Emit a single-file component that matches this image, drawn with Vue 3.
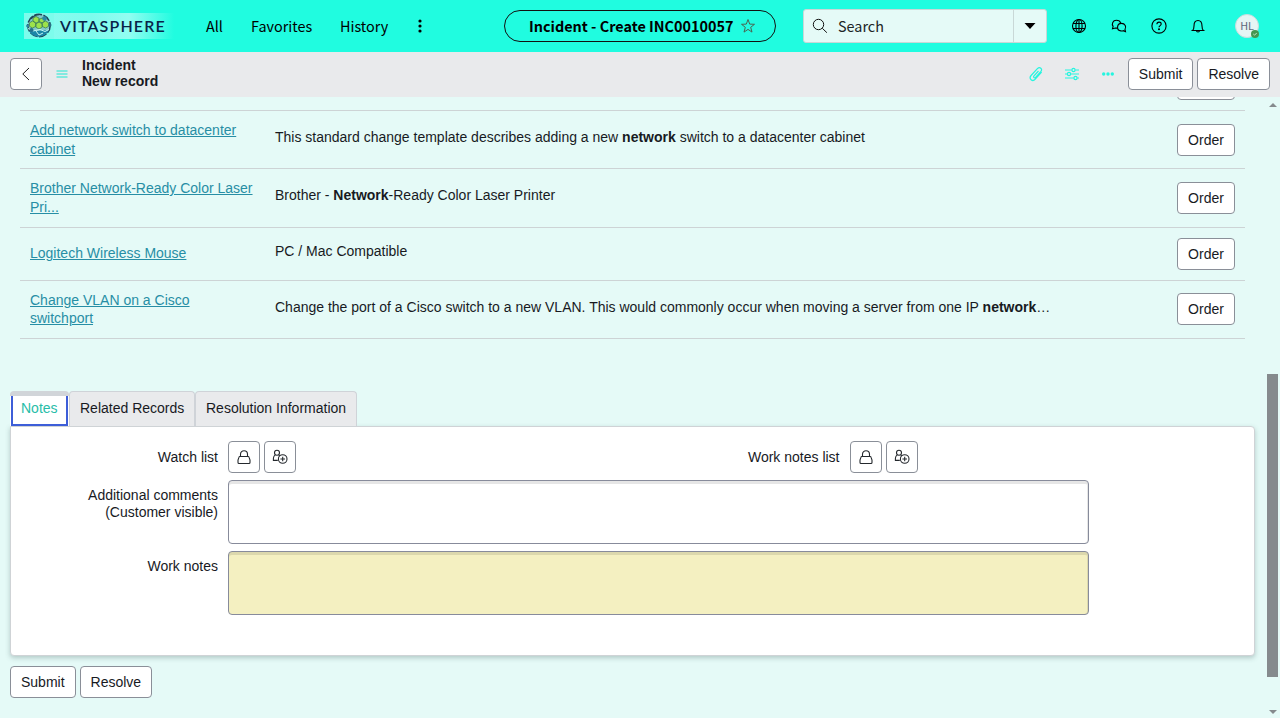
<script setup>
const rows = [
  { h: 58, lines: ['Add network switch to datacenter', 'cabinet'], pre: 'This standard change template describes adding a new ', bold: 'network', post: ' switch to a datacenter cabinet' },
  { h: 59, lines: ['Brother Network-Ready Color Laser', 'Pri...'], pre: 'Brother - ', bold: 'Network', post: '-Ready Color Laser Printer' },
  { h: 53, single: true, lines: ['Logitech Wireless Mouse'], pre: 'PC / Mac Compatible', bold: '', post: '' },
  { h: 58, last: true, lines: ['Change VLAN on a Cisco', 'switchport'], pre: 'Change the port of a Cisco switch to a new VLAN. This would commonly occur when moving a server from one IP ', bold: 'network', post: '…' }
]
const lists = ['Watch list', 'Work notes list']
</script>

<template>
  <div class="app">
    <header class="top">
      <div class="brand">
        <svg class="globe" width="30" height="26" viewBox="0 0 30 26">
          <rect width="30" height="26" fill="#7dfcec" />
          <circle cx="15" cy="12.500" r="11.200" fill="#83c9c9" stroke="#1d4357" stroke-width="1.500" stroke-dasharray="8 1.500" />
          <g fill="#9de24b" stroke="#3d7f55" stroke-width=".8"><path d="m15 9 3.200 1.800v3.400L15 16l-3.200-1.800v-3.400ZM8.500 8l3.300 1.800v3.600L8.500 15l-3-1.600V9.800ZM21.500 8l3 1.800v3.600l-3 1.600-3.300-1.600V9.800ZM12 3.500l3 1.600v3.400l-3.200 1.800L9 8V5.100ZM18.500 5l2.500 1.300V8l-2.800 1.800L15 8.500V6.300Z" /></g>
          <path d="M5 18q4-1 8 0l6-1q3 0 6 .5-3 5.500-10 6.300Q8 23.500 5 18Z" fill="#1b86a8" />
          <path d="M4 15.500 9 18l7-1.500 5 2 4-2M12 18l3 4 4-2" fill="none" stroke="#c4f8f5" />
          <circle cx="3.500" cy="13" r="1.400" fill="#2c86a6" /><circle cx="26" cy="12" r="1.500" fill="#2a7187" />
          <circle cx="20.500" cy="5.500" r="2.300" fill="#2788a6" /><circle cx="7.500" cy="17" r="2" fill="#24708c" />
          <path d="M7 6q3-4 8-4.300" fill="none" stroke="#224b59" stroke-width="1.200" />
        </svg>
        <span class="brand-name">VITASPHERE</span>
      </div>
      <nav class="nav"><span class="n1">All</span><span class="n2">Favorites</span><span class="n3">History</span>
        <svg width="4" height="14" viewBox="0 0 4 14"><circle cx="2" cy="2" r="1.600" /><circle cx="2" cy="7" r="1.600" /><circle cx="2" cy="12" r="1.600" /></svg>
      </nav>
      <div class="pill"><b>Incident - Create INC0010057</b>
        <svg width="16" height="16" viewBox="0 0 16 16" fill="none" stroke="#4a6552"><path d="m8 1.500 1.700 4.600 4.800.2-3.800 3 1.300 4.800L8 11.400l-4 2.700 1.300-4.800-3.800-3 4.800-.2Z" /></svg>
      </div>
      <div class="search">
        <svg width="16" height="16" viewBox="0 0 16 16" fill="none" stroke="#111"><circle cx="6.500" cy="6.500" r="5.200" /><path d="m10.300 10.300 4.600 4.400" /></svg>
        <span>Search</span>
        <div class="drop"><svg width="12" height="6" viewBox="0 0 12 6"><path d="M.5 0h11L6 6Z" /></svg></div>
      </div>
      <div class="icons">
        <svg width="16" height="16" viewBox="0 0 16 16"><circle cx="8" cy="8" r="6.500" /><ellipse cx="8" cy="8" rx="3.100" ry="6.500" /><path d="M2 5.500h12M2 10.500h12M8 1.500v13" /></svg>
        <svg width="16" height="16" viewBox="0 0 16 16"><path d="M6.600 10c-.6.2-1.400.2-2.200 0l-2.900.8.600-2.400C.4 6 1.800 2.300 5.300 2.300c2.200 0 3.900 1.200 4.300 2.900" /><path d="M10.500 5.400c-4.900 0-5.400 6.900-.6 7.500.8.1 1.500 0 2.200-.2l2.400.9-.5-2.300c1.700-2.500.1-5.900-3.500-5.900Z" /></svg>
        <svg width="16" height="16" viewBox="0 0 16 16"><circle cx="8" cy="8" r="7.100" /><path d="M5.900 6.200c0-2.900 4.300-2.700 4.300-.2 0 1.600-2.200 1.600-2.200 3.300" /><circle cx="8" cy="11.300" r=".45" fill="#000" /></svg>
        <svg width="16" height="16" viewBox="0 0 16 16"><path d="M2.500 12.500c1.300-.9 1.500-2 1.500-4.500 0-3.600 1.300-5.500 4-5.500S12 4.400 12 8c0 2.500.2 3.600 1.500 4.500ZM6.500 12.500c0 2 3 2 3 0" /></svg>
      </div>
      <div class="avatar">HL<svg class="status" width="8" height="8" viewBox="0 0 8 8"><circle cx="4" cy="4" r="4" fill="#459653" /><path d="m2.300 4 1.200 1.200L5.700 3" fill="none" stroke="#c5e7c8" /></svg></div>
    </header>

    <div class="record">
      <button class="btn back"><svg width="16" height="16" viewBox="0 0 16 16" fill="none" stroke="#222"><path d="M11 2 4.800 8l6.200 6" /></svg></button>
      <svg class="menu" width="12" height="8" viewBox="0 0 12 8"><path d="M.5 1h11M.5 4h11M.5 7h11" stroke="#1ce8d2" /></svg>
      <div class="title">Incident<br>New record</div>
      <div class="tools">
        <svg width="16" height="16" viewBox="0 0 16 16"><path d="M10.500 5 6 9.900c-1.100 1.300.5 2.700 1.600 1.500l5.100-5.700c2.300-2.700-.9-5.600-3.300-3L3.100 9.500c-2.700 3.200 1.300 6.800 4.200 3.700l6.300-7.100" /></svg>
        <svg width="16" height="16" viewBox="0 0 16 16"><path d="M1 4h6.700M11.300 4H15M1 8h2.200M6.800 8H15M1 12h8.700M13.300 12H15" /><circle cx="9.500" cy="4" r="1.600" /><circle cx="5" cy="8" r="1.600" /><circle cx="11.500" cy="12" r="1.600" /></svg>
        <svg width="16" height="16" viewBox="0 0 16 16"><g fill="#25f5df" stroke="none"><circle cx="3.700" cy="8" r="1.700" /><circle cx="8" cy="8" r="1.700" /><circle cx="12.300" cy="8" r="1.700" /></g></svg>
      </div>
      <button class="btn submit">Submit</button><button class="btn resolve">Resolve</button>
    </div>

    <main class="body">
      <div class="content">
        <div class="catalog">
          <div class="row clipped"><button class="btn order" aria-label="Order"></button></div>
          <div v-for="row in rows" :key="row.lines[0]" class="row" :class="{ single: row.single, last: row.last }" :style="{ height: row.h + 'px' }">
            <a class="name"><template v-for="(line, i) in row.lines" :key="line"><br v-if="i">{{ line }}</template></a>
            <div class="desc">{{ row.pre }}<b>{{ row.bold }}</b>{{ row.post }}</div>
            <button class="btn order">Order</button>
          </div>
        </div>
        <div class="tabs"><div class="tab active">Notes</div><div class="tab related">Related Records</div><div class="tab info">Resolution Information</div></div>
        <section class="panel">
          <div class="lists">
            <div v-for="label in lists" :key="label" class="field">
              <label>{{ label }}</label>
              <button class="btn icon"><svg width="16" height="16" viewBox="0 0 16 16"><path d="M4.500 7.500V5.200c0-4.700 7-4.700 7 0v2.300M3.800 7.500h8.400q.6 0 .8.700l1 2.800v2.500q0 1-1 1H3q-1 0-1-1V11l1-2.800q.2-.7.800-.7Z" /></svg></button>
              <button class="btn icon"><svg width="16" height="16" viewBox="0 0 16 16"><circle cx="5" cy="3.800" r="2.500" /><path d="M3.300 5.900C1.500 7 1.200 8.800 1.400 11.400h4.400M6.700 5.900l1 .9" /><circle cx="10.700" cy="10" r="4.300" /><path d="M10.700 7.700v4.600M8.400 10H13" /></svg></button>
            </div>
          </div>
          <div class="comment"><label>Additional comments<br>(Customer visible)</label><div class="area"></div></div>
          <div class="comment notes"><label>Work notes</label><div class="area yellow"></div></div>
        </section>
        <div class="footer"><button class="btn">Submit</button><button class="btn res2">Resolve</button></div>
      </div>
      <div class="scroll">
        <svg width="8" height="4" viewBox="0 0 8 4"><path d="M0 4h8L4 0Z" /></svg><div class="thumb"></div><svg width="8" height="4" viewBox="0 0 8 4"><path d="M0 0h8L4 4Z" /></svg>
      </div>
    </main>
  </div>
</template>

<style>
html, body { background: #fff; overflow: hidden; }
</style>
<style scoped>
* { box-sizing: border-box; }
svg { display: block; flex: none; }
.app { width: 1280px; height: 718px; background: #e5faf7; font: 14px/17px "Liberation Sans", Arial, sans-serif; color: #181a1f; overflow: hidden; display: flex; flex-direction: column; }
.top { height: 52px; flex: none; background: #20fce0; display: flex; align-items: center; font-family: "Noto Sans CJK SC", sans-serif; color: #000; }
.brand { margin-left: 24px; width: 150px; height: 26px; display: flex; align-items: center; background: linear-gradient(90deg, #8efbf0 0, #7dfced 45%, #92fdf1 70%, #20fce0 100%); }
.brand-name { margin-left: 6px; padding-bottom: 1px; font: 600 16px/25px Lato, sans-serif; letter-spacing: 1.150px; color: #082448; }
.nav { width: 330px; padding-left: 32px; display: flex; align-items: center; font-size: 14.400px; line-height: 24px; }
.n1 { width: 45px; } .n2 { width: 89px; } .n3 { width: 78px; }
.pill { width: 272px; height: 32px; border: 1px solid #111; border-radius: 16px; display: flex; align-items: center; padding-left: 24px; font-size: 14.400px; line-height: 24px; white-space: nowrap; }
.pill b { width: 211px; }
.search { margin-left: 27px; width: 244px; height: 34px; border: 1px solid #c9d8d7; border-radius: 3px; background: #e5faf7; display: flex; align-items: center; padding-left: 8px; font-size: 14.400px; line-height: 24px; color: #202425; }
.search span { margin-left: 10px; flex: 1; }
.drop { width: 33px; height: 32px; border-left: 1px solid #c9d8d7; display: flex; align-items: center; justify-content: center; }
.drop svg { fill: #000; }
.icons { margin-left: 24px; width: 164px; display: flex; gap: 24px; fill: none; stroke: #000; stroke-width: 1.100; }
.icons svg:nth-child(n+3) { margin-left: -.5px; }
.avatar { position: relative; width: 24px; height: 24px; border-radius: 50%; background: #e5f5f4; border: 1px solid #c8dcdd; color: #60697b; font-size: 10.800px; line-height: 20px; text-align: center; }
.status { position: absolute; right: -1px; bottom: -1px; }
.record { height: 45px; flex: none; background: #e9eaec; display: flex; align-items: center; padding: 0 10px 2px; }
.btn { height: 32px; padding: 0 10px; border: 1px solid #8a8f98; border-radius: 4px; background: #fff; color: #181a1f; font: 14px/20px "Liberation Sans", Arial, sans-serif; flex: none; white-space: nowrap; }
.back { width: 32px; padding: 0 7px; }
.menu { margin-left: 14px; }
.title { margin-left: 14px; margin-top: -2px; font-weight: bold; line-height: 16px; flex: 1; }
.tools { display: flex; gap: 20px; margin-right: 12px; fill: none; stroke: #25f5df; stroke-width: 1.200; }
.submit { margin-right: 4px; }
.body { flex: 1; min-height: 0; display: flex; overflow: hidden; }
.content { width: 1265px; padding: 0 10px; }
.catalog { margin: 0 10px 52px; width: 1225px; }
.row { border-bottom: 1px solid #cdd3d5; display: flex; align-items: flex-start; padding: 10px 10px 0; }
.clipped { height: 14px; padding: 0 10px 10px; align-items: flex-end; justify-content: flex-end; overflow: hidden; }
.name { width: 245px; color: #278ea5; text-decoration: underline; line-height: 18.600px; }
.desc { flex: 1; padding-top: 8px; white-space: nowrap; }
.order { width: 58px; margin-top: 3px; }
.clipped .order { margin: 0; }
.last .name { line-height: 18px; }
.last .order { margin-top: 2px; }
.single .name { padding-top: 6px; }
.single .desc { padding-top: 5px; }
.single .order { margin-top: 0; }
.tabs { display: flex; height: 35px; }
.tab { height: 35px; border: 1px solid #cfd3d8; border-bottom: 0; border-radius: 4px 4px 0 0; background: #e9eaec; padding: 8px 10px 0; white-space: nowrap; }
.active { position: relative; width: 59px; border: 0; padding: 9px 0 0 11px; color: #28bda8; background: linear-gradient(#d1d5d9 5px, #fff 5px); }
.active::after { content: ""; position: absolute; left: 1px; right: 1px; top: 5px; bottom: 0; border: 2px solid #3d5ed8; border-top: 0; }
.related { width: 126px; } .info { width: 162px; }
.panel { width: 1245px; height: 230px; background: #fff; border: 1px solid #cfd3d6; border-radius: 0 4px 4px 4px; box-shadow: 0 2px 5px rgba(60, 90, 90, .3); padding-top: 14px; }
.lists { display: flex; }
.field { width: 622px; display: flex; align-items: center; gap: 4px; }
.field label { width: 207px; margin-right: 6px; text-align: right; }
.icon { width: 32px; padding: 0 7px; }
.icon svg { fill: none; stroke: #24282d; stroke-width: 1.100; }
.comment { margin-top: 7px; display: flex; }
.comment label { width: 207px; margin-right: 10px; text-align: right; padding-top: 7px; }
.area { width: 861px; height: 64px; border: 1px solid #878b9b; border-radius: 4px; background: #fff; box-shadow: inset 0 3px #e6e6e6, inset -1px 0 #e6e6e6; }
.yellow { background: #f4f0c1; box-shadow: inset 0 3px #dcd8ad, inset -1px 0 #dcd8ad; }
.footer { display: flex; gap: 4px; margin-top: 10px; }
.scroll { width: 15px; display: flex; flex-direction: column; align-items: center; padding: 6px 0 4px; fill: #858a8d; }
.thumb { width: 11px; height: 303px; background: #858a8d; margin: 267px 0 33px; }
</style>
